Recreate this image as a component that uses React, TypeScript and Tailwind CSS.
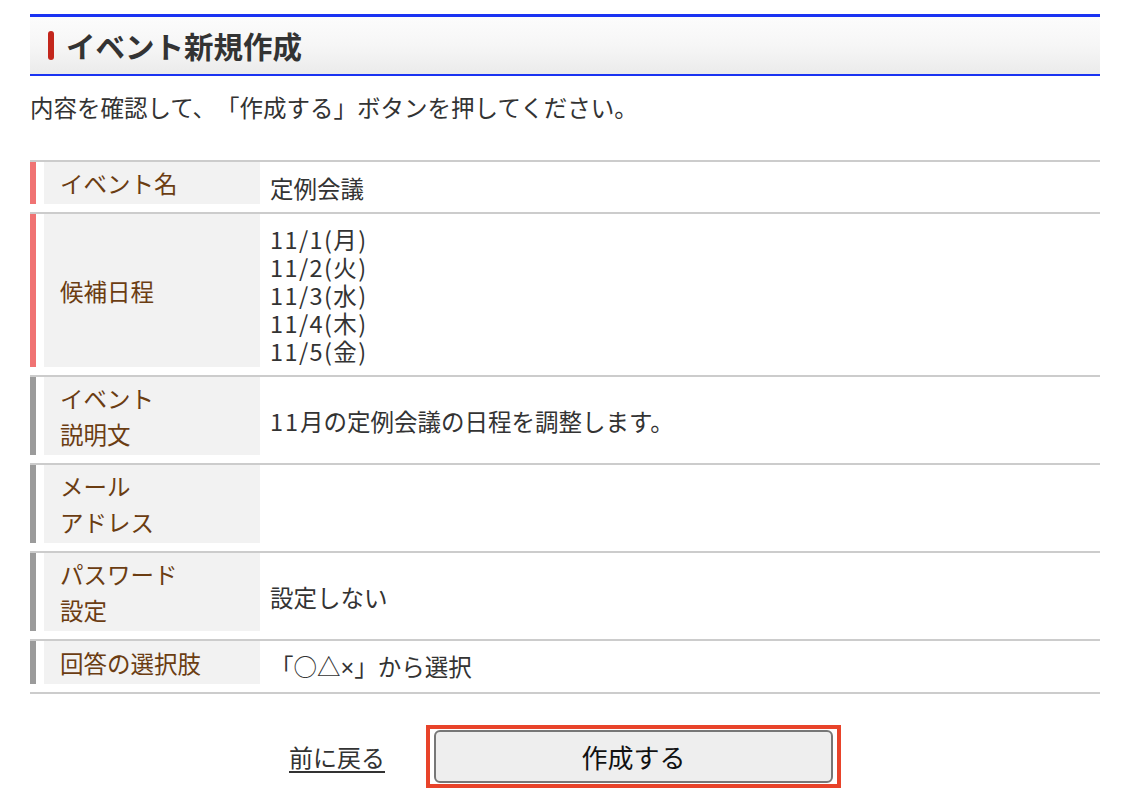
import { FunctionComponent, ReactNode } from "react";

type Row = {
  label: string[];
  required?: boolean;
  value: ReactNode[];
};

const ROWS: Row[] = [
  { label: ["イベント名"], required: true, value: ["定例会議"] },
  {
    label: ["候補日程"],
    required: true,
    value: ["11/1(月)", "11/2(火)", "11/3(水)", "11/4(木)", "11/5(金)"].map(
      (date) => (
        <span key={date} className="tracking-[1.4px]">
          {date}
        </span>
      )
    ),
  },
  {
    label: ["イベント", "説明文"],
    value: [
      <>
        <span className="tracking-[2px]">11</span>月の定例会議の日程を調整します。
      </>,
    ],
  },
  { label: ["メール", "アドレス"], value: [] },
  { label: ["パスワード", "設定"], value: ["設定しない"] },
  {
    label: ["回答の選択肢"],
    value: [
      <>
        「○△
        <span style={{ fontFamily: '"Liberation Sans", sans-serif' }}>×</span>
        」から選択
      </>,
    ],
  },
];

const ConfirmRow: FunctionComponent<{ row: Row; last: boolean }> = ({
  row,
  last,
}): JSX.Element => {
  return (
    <div
      className={`relative w-full border-t-2 border-[#cccccc] pb-[8px] ${
        last ? "border-b-2" : ""
      }`}
    >
      <div className="relative flex flex-row w-full items-stretch">
        <div
          className={`w-[6px] shrink-0 ${
            row.required ? "bg-[#f07373]" : "bg-[#9b9b9b]"
          }`}
        />
        <div className="w-[8px] shrink-0" />
        <div className="flex items-center w-[216px] shrink-0 bg-[#f2f2f2] pl-[16px] py-[3px] text-[23.5px] leading-[36px] text-[#6b3d12]">
          <div>
            {row.label.map((line, index) => (
              <div key={index}>{line}</div>
            ))}
          </div>
        </div>
        <div className="flex flex-1 items-center pl-[10px] text-[23.5px] leading-[28px] text-[#333333]">
          <div className="pt-[11px] pb-[2px]">
            {row.value.map((line, index) => (
              <div key={index}>{line}</div>
            ))}
          </div>
        </div>
      </div>
    </div>
  );
};

const App: FunctionComponent = (): JSX.Element => {
  return (
    <div
      className="w-[1130px] h-[788px] overflow-hidden bg-white [text-spacing-trim:space-all]"
      style={{ fontFamily: '"Noto Sans CJK JP", "Noto Sans", sans-serif' }}
    >
      <div className="w-[1070px] ml-[30px]">
        <div className="mt-[14px] h-[62px] flex flex-row items-center border-t-[3px] border-b-2 border-[#1a33f2] bg-gradient-to-b from-[#fcfcfc] via-[#f6f6f6] to-[#ebebeb] pl-[18px]">
          <div className="w-[6px] h-[29px] rounded-sm bg-[#c3261c]" />
          <div className="ml-[12px] text-[29.5px] font-bold text-[#333333] leading-none">
            イベント新規作成
          </div>
        </div>

        <div className="mt-[13px] text-[23.5px] leading-[36px] text-[#333333]">
          内容を確認して、「作成する」ボタンを押してください。
        </div>

        <div className="mt-[35px] flex flex-col w-full">
          {ROWS.map((row, index) => (
            <ConfirmRow key={index} row={row} last={index === ROWS.length - 1} />
          ))}
        </div>

        <div className="mt-[31px] flex flex-row justify-center items-center gap-[41px]">
          <a
            href="#"
            className="text-[24px] leading-none text-[#333333] underline underline-offset-4 decoration-[1.5px]"
          >
            前に戻る
          </a>
          <div className="w-[415px] h-[63px] border-[4px] border-[#e8432a] px-[4px] pt-[1px]">
            <button className="w-full h-[53px] rounded-[6px] border-2 border-[#777777] bg-[#eeeeee] text-[26px] leading-none text-[#111111]">
              作成する
            </button>
          </div>
        </div>
      </div>
    </div>
  );
};

export default App;
